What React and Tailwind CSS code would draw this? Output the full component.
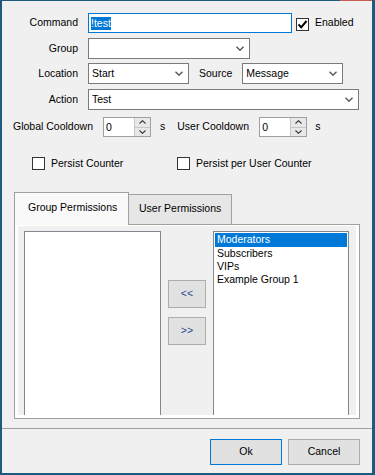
import React from "react";

const Chevron = () => (
  <svg width="8" height="5" viewBox="0 0 8 5" className="shrink-0">
    <path d="M0.5 0.8 L4 4.2 L7.5 0.8" stroke="#555" strokeWidth="1.4" fill="none" />
  </svg>
);

const Combo = ({ w, text }) => (
  <div className={`flex items-center justify-between border border-[#7a7a7a] bg-white h-[21px] pl-[3px] pr-[5px] ${w}`}>
    <span className="leading-none">{text}</span>
    <Chevron />
  </div>
);

const Check = ({ checked }) => (
  <div className="w-[13px] h-[13px] border border-[#333] bg-white flex items-center justify-center shrink-0">
    {checked && (
      <svg width="11" height="11" viewBox="0 0 11 11">
        <path d="M1.5 5.5 L4.2 8.3 L9.5 2" stroke="#000" strokeWidth="2" fill="none" />
      </svg>
    )}
  </div>
);

const Spin = () => (
  <div className="flex items-stretch border border-[#a0a0a0] bg-white h-[20px] w-[48px]">
    <span className="flex-1 pl-[2px] flex items-center leading-none">0</span>
    <div className="w-[16px] flex flex-col border-l border-[#c8c8c8]">
      <div className="flex-1 flex items-center justify-center bg-[#e8e8e8] border-b border-[#c8c8c8]">
        <svg width="7" height="4" viewBox="0 0 7 4"><path d="M0.5 3.5 L3.5 0.7 L6.5 3.5" stroke="#333" strokeWidth="1.1" fill="none" /></svg>
      </div>
      <div className="flex-1 flex items-center justify-center bg-[#e8e8e8]">
        <svg width="7" height="4" viewBox="0 0 7 4"><path d="M0.5 0.5 L3.5 3.3 L6.5 0.5" stroke="#333" strokeWidth="1.1" fill="none" /></svg>
      </div>
    </div>
  </div>
);

const Btn = ({ children, className = "" }) => (
  <div className={`flex items-center justify-center bg-[#e1e1e1] border border-[#adadad] ${className}`}>{children}</div>
);

export default function App() {
  return (
    <div className="relative w-[375px] h-[475px]" style={{ fontFamily: '"Liberation Sans", Arial, sans-serif' }}>
      <div className="w-[375px] h-[475px] bg-[#f0f0f0] border-l-2 border-r-[3px] border-b-2 border-t border-[#1d5a80] flex flex-col text-[10.5px] text-black overflow-hidden">
        {/* Command */}
        <div className="flex items-center mt-[12px]">
          <div className="w-[76px] text-right">Command</div>
          <div className="ml-[10px] w-[204px] h-[20px] border border-[#0078d7] bg-white flex items-center pl-[2px]">
            <span className="bg-[#0078d7] text-white leading-[13px]">!test</span>
          </div>
          <div className="ml-[4px] mt-[2px]"><Check checked /></div>
          <span className="ml-[6px]">Enabled</span>
        </div>

        {/* Group */}
        <div className="flex items-center mt-[5px]">
          <div className="w-[76px] text-right">Group</div>
          <div className="ml-[10px]"><Combo w="w-[162px]" text="" /></div>
        </div>

        {/* Location / Source */}
        <div className="flex items-center mt-[4px]">
          <div className="w-[76px] text-right">Location</div>
          <div className="ml-[10px]"><Combo w="w-[101px]" text="Start" /></div>
          <span className="ml-[10px]">Source</span>
          <div className="ml-[10px]"><Combo w="w-[101px]" text="Message" /></div>
        </div>

        {/* Action */}
        <div className="flex items-center mt-[5px]">
          <div className="w-[76px] text-right">Action</div>
          <div className="ml-[10px]"><Combo w="w-[271px]" text="Test" /></div>
        </div>

        {/* Cooldowns */}
        <div className="flex items-center mt-[7px]">
          <span className="ml-[11px] w-[90px]">Global Cooldown</span>
          <Spin />
          <span className="ml-[9px]">s</span>
          <span className="ml-[12px] w-[82px]">User Cooldown</span>
          <Spin />
          <span className="ml-[8px]">s</span>
        </div>

        {/* Persist */}
        <div className="flex items-center mt-[19px]">
          <div className="ml-[30px]"><Check /></div>
          <span className="ml-[6px] w-[126px]">Persist Counter</span>
          <Check />
          <span className="ml-[6px]">Persist per User Counter</span>
        </div>

        {/* Tabs */}
        <div className="ml-[12px] mt-[20px] flex items-end relative z-10">
          <div className="w-[115px] h-[33px] bg-[#f9f9f9] border border-b-0 border-[#a0a0a0] flex items-center pl-[13px] mb-[-1px] pb-[2px]">
            Group Permissions
          </div>
          <div className="w-[103px] h-[30px] bg-[#e6e6e6] border border-l-0 border-b-0 border-[#a0a0a0] flex items-center pl-[10px]">
            User Permissions
          </div>
        </div>
        <div className="ml-[12px] w-[346px] h-[195px] border border-[#a0a0a0] bg-white pt-[1px] px-[3px] pb-[3px] flex">
          <div className="flex-1 bg-[#f0f0f0] overflow-hidden flex pl-[6px] pt-[5px] gap-[7px]">
            <div className="w-[137px] h-[200px] bg-white border border-[#828790] shrink-0" />
            <div className="flex flex-col gap-[9px] mt-[49px]">
              <Btn className="w-[38px] h-[28px]"><span className="text-[#1e4b8c]">&lt;&lt;</span></Btn>
              <Btn className="w-[38px] h-[28px]"><span className="text-[#1e4b8c]">&gt;&gt;</span></Btn>
            </div>
            <div className="w-[136px] h-[200px] bg-white border border-[#828790] shrink-0 p-[1px] flex flex-col leading-[13px]">
              <div className="bg-[#0078d7] text-white pl-[2px] h-[14px] flex items-center">Moderators</div>
              <div className="pl-[2px]">Subscribers</div>
              <div className="pl-[2px]">VIPs</div>
              <div className="pl-[2px]">Example Group 1</div>
            </div>
          </div>
        </div>

        {/* Separator */}
        <div className="mt-[9px] h-[1px] bg-[#a0a0a0]" />

        {/* Footer */}
        <div className="flex justify-end gap-[6px] mr-[12px] mt-[10px]">
          <Btn className="w-[72px] h-[26px] !border-[#0078d7]">Ok</Btn>
          <Btn className="w-[72px] h-[26px]">Cancel</Btn>
        </div>
      </div>
      <div className="absolute top-0 left-[340px] w-[32px] h-[1px] bg-[#c85a50]" />
    </div>
  );
}
